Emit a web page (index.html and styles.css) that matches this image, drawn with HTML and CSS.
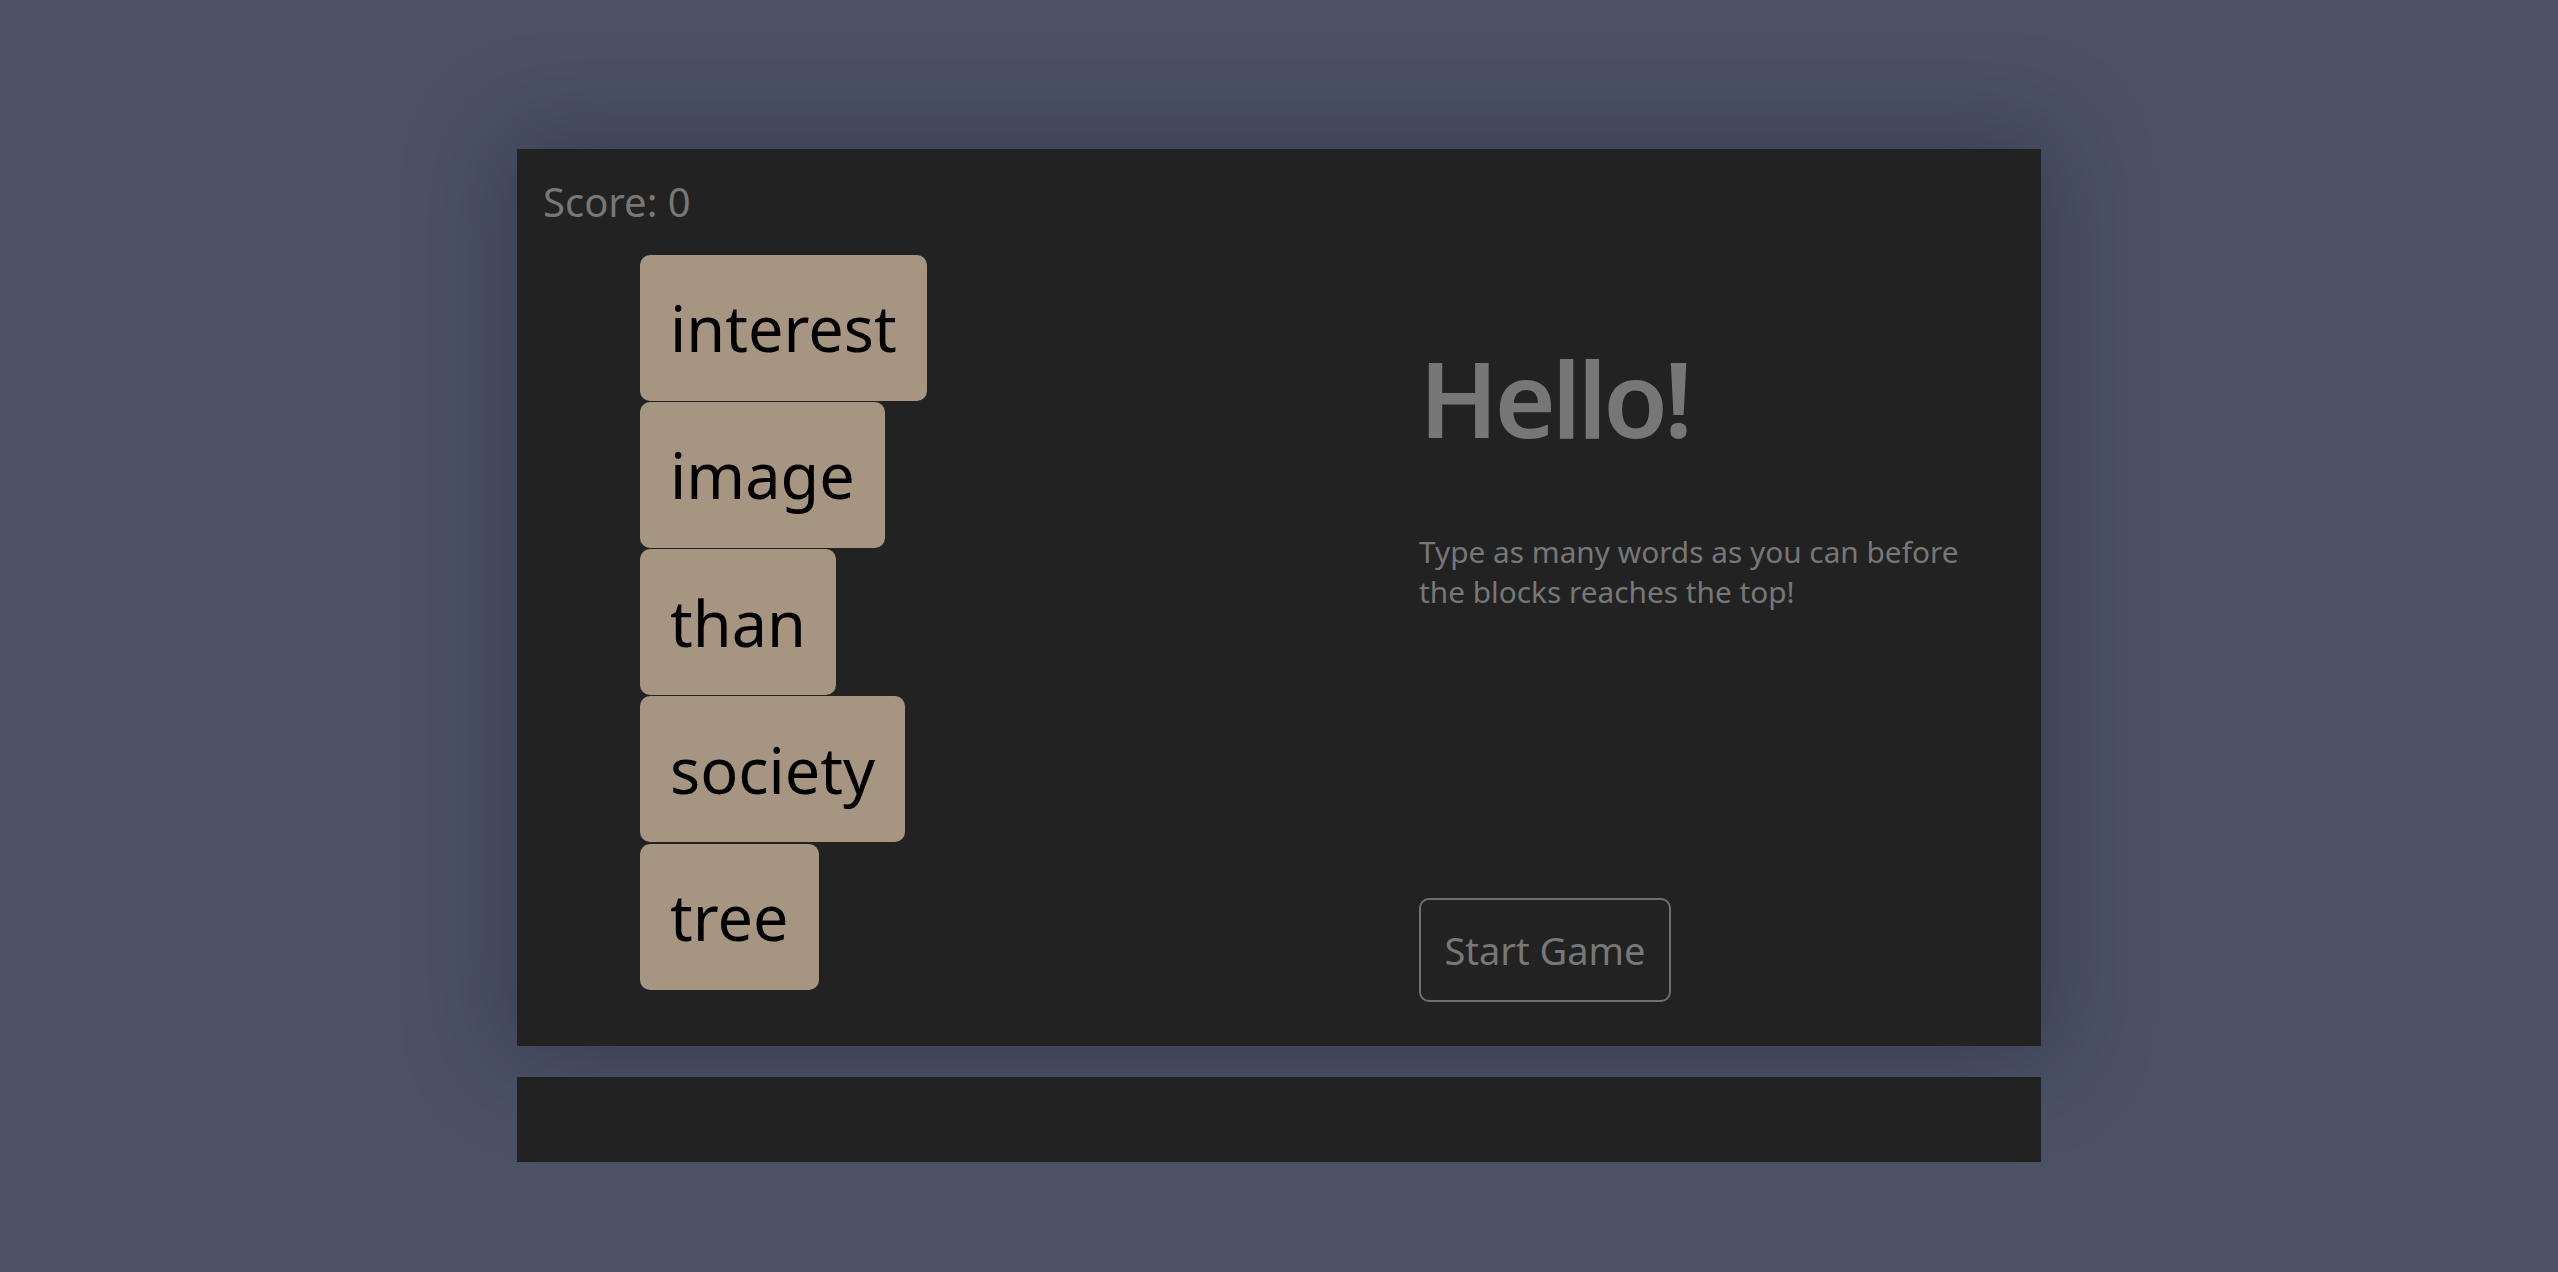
FILE: index.html
```html
<!DOCTYPE html>
<html lang="en">
<head>
<meta charset="utf-8">
<title>Word Blocks</title>
<link rel="stylesheet" href="styles.css">
</head>
<body>
<div class="wrap">
  <main class="panel">
    <section class="game">
      <div class="score">Score: 0</div>
      <div class="stack">
        <div class="block">interest</div>
        <div class="block">image</div>
        <div class="block">than</div>
        <div class="block">society</div>
        <div class="block">tree</div>
      </div>
    </section>
    <section class="intro">
      <h1 class="title">Hello!</h1>
      <p class="desc">Type as many words as you can before the blocks reaches the top!</p>
      <button class="start">Start Game</button>
    </section>
  </main>
  <div class="bar"></div>
</div>
</body>
</html>
```
FILE: styles.css
```css
html, body {
  margin: 0;
  padding: 0;
}
body {
  background: #4b5266;
  font-family: "Noto Sans", "Open Sans", sans-serif;
  height: 1272px;
  overflow: hidden;
}
.wrap {
  width: 1524px;
  margin: 0 auto;
  padding-top: 149px;
}
.panel {
  height: 897px;
  background: #222222;
  display: flex;
  box-shadow: 0 0 90px 10px rgba(20, 24, 36, 0.35);
}
.game {
  flex: 0 0 902px;
  box-sizing: border-box;
  padding: 25px 26px;
}
.score {
  font-size: 40px;
  color: #777777;
}
.stack {
  margin: 25.5px 0 0 97px;
  display: flex;
  flex-direction: column;
  align-items: flex-start;
  gap: 1.25px;
}
.block {
  height: 146px;
  box-sizing: border-box;
  padding: 0 30px;
  display: flex;
  align-items: center;
  background: #a69580;
  color: #000;
  font-size: 63px;
  border-radius: 10px;
}
.intro {
  flex: 1;
  display: flex;
  flex-direction: column;
  align-items: flex-start;
  padding: 196px 0 44px 0;
}
.title {
  margin: 0;
  font-size: 105px;
  line-height: 105px;
  font-weight: 600;
  letter-spacing: -4px;
  color: #777777;
}
.desc {
  margin: 82px 0 0 0;
  width: 565px;
  font-size: 29.8px;
  line-height: 40px;
  color: #777777;
}
.start {
  margin: auto 0 0 0;
  width: 252px;
  height: 104px;
  background: transparent;
  border: 2px solid #707070;
  border-radius: 10px;
  color: #777777;
  font-family: "Noto Sans", "Open Sans", sans-serif;
  font-size: 38px;
  padding: 0;
}
.bar {
  margin-top: 31px;
  height: 85px;
  background: #222222;
}
```
